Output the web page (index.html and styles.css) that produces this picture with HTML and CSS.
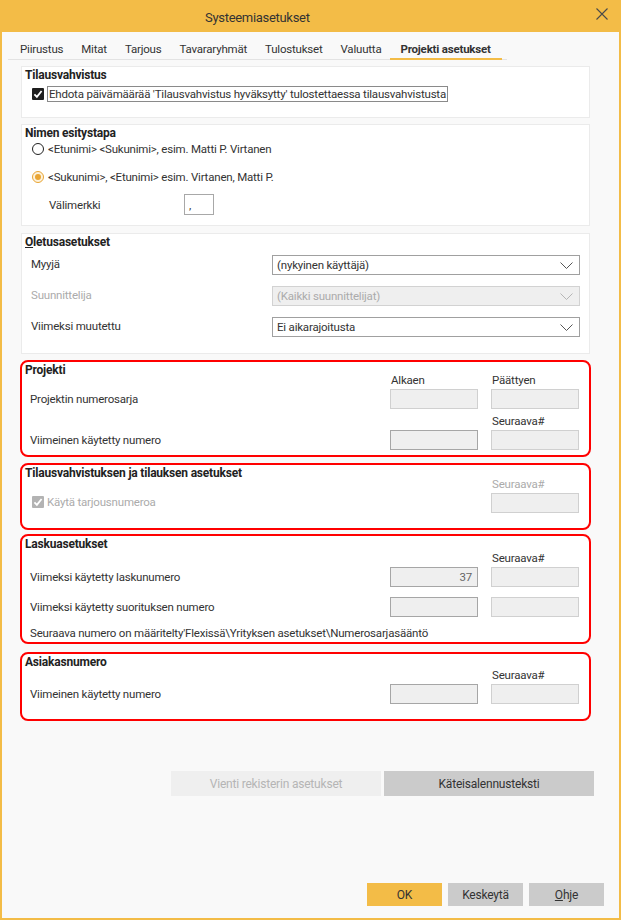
FILE: index.html
```html
<!DOCTYPE html>
<html lang="fi">
<head>
    <meta charset="UTF-8">
    <title>Systeemiasetukset</title>
    <link rel="stylesheet" href="styles.css">
</head>
<body>

<div class="window">
    <div class="titlebar">
        <span class="title">Systeemiasetukset</span>
        <svg class="close" width="12" height="12" viewBox="0 0 12 12">
            <path d="M0.5 0.5 L11.5 11.5 M11.5 0.5 L0.5 11.5" stroke="#4a4a4a" stroke-width="1.1" fill="none"/>
        </svg>
    </div>

    <!-- tab strip -->
    <div class="tabs">
        <span class="tab">Piirustus</span>
        <span class="tab">Mitat</span>
        <span class="tab">Tarjous</span>
        <span class="tab">Tavararyhmät</span>
        <span class="tab">Tulostukset</span>
        <span class="tab">Valuutta</span>
        <span class="tab active">Projekti asetukset</span>
    </div>

    <div class="groups">
        <!-- Tilausvahvistus -->
        <section class="group g-confirm">
            <h3>Tilausvahvistus</h3>
            <label class="check">
                <svg class="box" width="12" height="12" viewBox="0 0 12 12">
                    <rect width="12" height="12" rx="1" fill="#1e1e1e"/>
                    <path d="M2.4 6.3 L4.9 8.8 L9.6 3" stroke="#fff" stroke-width="1.8" fill="none"/>
                </svg>
                <span class="focus">Ehdota päivämäärää 'Tilausvahvistus hyväksytty' tulostettaessa tilausvahvistusta</span>
            </label>
        </section>

        <!-- Nimen esitystapa -->
        <section class="group g-name">
            <h3>Nimen esitystapa</h3>
            <label class="radio-row"><span class="radio"></span>&lt;Etunimi&gt; &lt;Sukunimi&gt;, esim. Matti P. Virtanen</label>
            <label class="radio-row second"><span class="radio on"></span>&lt;Sukunimi&gt;, &lt;Etunimi&gt; esim. Virtanen, Matti P.</label>
            <div class="sep-row">
                <span class="sep-label">Välimerkki</span>
                <span class="sep-input">,</span>
            </div>
        </section>

        <!-- Oletusasetukset -->
        <section class="group g-defaults">
            <h3><u>O</u>letusasetukset</h3>
            <div class="select-row first">
                <span class="row-label">Myyjä</span>
                <div class="select">(nykyinen käyttäjä)<svg class="chev" width="13" height="7" viewBox="0 0 13 7"><path d="M0.5 0.5 L6.5 6.5 L12.5 0.5" stroke="#555" stroke-width="1" fill="none"/></svg></div>
            </div>
            <div class="select-row">
                <span class="row-label muted">Suunnittelija</span>
                <div class="select disabled">(Kaikki suunnittelijat)<svg class="chev" width="13" height="7" viewBox="0 0 13 7"><path d="M0.5 0.5 L6.5 6.5 L12.5 0.5" stroke="#b5b5b5" stroke-width="1" fill="none"/></svg></div>
            </div>
            <div class="select-row">
                <span class="row-label">Viimeksi muutettu</span>
                <div class="select">Ei aikarajoitusta<svg class="chev" width="13" height="7" viewBox="0 0 13 7"><path d="M0.5 0.5 L6.5 6.5 L12.5 0.5" stroke="#555" stroke-width="1" fill="none"/></svg></div>
            </div>
        </section>

        <!-- Projekti -->
        <section class="group marked g-project">
            <h3>Projekti</h3>
            <div class="num-row top">
                <span class="row-label">Projektin numerosarja</span>
                <div class="cell"><span class="caption">Alkaen</span><span class="num"></span></div>
                <div class="cell"><span class="caption">Päättyen</span><span class="num"></span></div>
            </div>
            <div class="num-row">
                <span class="row-label">Viimeinen käytetty numero</span>
                <div class="cell"><span class="num dark"></span></div>
                <div class="cell"><span class="caption">Seuraava#</span><span class="num"></span></div>
            </div>
        </section>

        <!-- Tilausvahvistuksen ja tilauksen asetukset -->
        <section class="group marked g-order">
            <h3>Tilausvahvistuksen ja tilauksen asetukset</h3>
            <div class="num-row order">
                <label class="check muted">
                    <svg class="box" width="12" height="12" viewBox="0 0 12 12">
                        <rect width="12" height="12" rx="1" fill="#b3b3b3"/>
                        <path d="M2.4 6.3 L4.9 8.8 L9.6 3" stroke="#fff" stroke-width="1.8" fill="none"/>
                    </svg>
                    Käytä tarjousnumeroa
                </label>
                <div class="cell"></div>
                <div class="cell"><span class="caption muted">Seuraava#</span><span class="num"></span></div>
            </div>
        </section>

        <!-- Laskuasetukset -->
        <section class="group marked g-invoice">
            <h3>Laskuasetukset</h3>
            <div class="num-row">
                <span class="row-label">Viimeksi käytetty laskunumero</span>
                <div class="cell"><span class="num dark">37</span></div>
                <div class="cell"><span class="caption">Seuraava#</span><span class="num"></span></div>
            </div>
            <div class="num-row second">
                <span class="row-label">Viimeksi käytetty suorituksen numero</span>
                <div class="cell"><span class="num dark"></span></div>
                <div class="cell"><span class="num"></span></div>
            </div>
            <p class="note">Seuraava numero on määritelty'Flexissä\Yrityksen asetukset\Numerosarjasääntö</p>
        </section>

        <!-- Asiakasnumero -->
        <section class="group marked g-customer">
            <h3>Asiakasnumero</h3>
            <div class="num-row">
                <span class="row-label">Viimeinen käytetty numero</span>
                <div class="cell"><span class="num dark"></span></div>
                <div class="cell"><span class="caption">Seuraava#</span><span class="num"></span></div>
            </div>
        </section>
    </div>

    <div class="extra-buttons">
        <button class="wide-btn" disabled>Vienti rekisterin asetukset</button>
        <button class="wide-btn">Käteisalennusteksti</button>
    </div>

    <div class="footer">
        <button class="btn primary">OK</button>
        <button class="btn">Keskeytä</button>
        <button class="btn"><u>O</u>hje</button>
    </div>
</div>

</body>
</html>
```

FILE: styles.css
```css
body {
    margin: 0;
    background-color: #ffffff;
    font-family: Roboto, "Liberation Sans", sans-serif;
    font-size: 11.5px;
    letter-spacing: -0.2px;
    color: #333;
}
.window {
    width: 621px;
    height: 920px;
    box-sizing: border-box;
    border: 2px solid #f3bc47;
    border-top: 0;
    background-color: #f9f9f9;
    display: flex;
    flex-direction: column;
}
.titlebar {
    height: 32px;
    margin: 0 -2px;
    background-color: #f3bc47;
    display: flex;
    align-items: center;
    padding-left: 205px;
}
.title {
    font-size: 13px;
    letter-spacing: -0.3px;
    color: #333;
    margin-top: 2px;
}
.close {
    margin-left: auto;
    margin-right: 13px;
    margin-bottom: 5px;
}

/* tabs */
.tabs {
    display: flex;
    width: 499px;
    margin: 8px 0 0 6px;
    border-bottom: 1px solid #e3e3e3;
    white-space: nowrap;
}
.tab {
    flex-shrink: 0;
    padding: 2px 9px;
    line-height: 14px;
    margin-bottom: -1px;
    border-bottom: 2px solid transparent;
    color: #333;
}
.tab:first-child {
    padding-left: 12px;
}
.tab.active {
    font-weight: bold;
    padding: 2px 11px 2px 10px;
    border-bottom-color: #f3bc47;
}

/* groups */
.groups {
    display: flex;
    flex-direction: column;
    gap: 6px;
    margin: 6px 29px 0 19px;
}
.group {
    background-color: #fff;
    border: 1px solid #ebebeb;
    padding: 1px 9px 0 3px;
}
.group h3 {
    margin: 0;
    font-size: 12px;
    line-height: 14px;
    font-weight: bold;
    color: #222;
}
.group.marked {
    border: 2px solid #ff0000;
    border-radius: 8px;
    margin-left: -1px;
    margin-right: -1px;
    padding-right: 10px;
}
.muted {
    color: #ababab;
}

.check {
    display: flex;
    align-items: center;
    gap: 3px;
    line-height: 14px;
    margin-left: 7px;
}
.focus {
    border: 1px solid #8a8a8a;
    padding: 0 1px;
}
.g-confirm {
    padding-bottom: 15px;
}
.g-confirm .check {
    margin-top: 4px;
}

.radio-row {
    display: flex;
    align-items: center;
    gap: 4px;
    line-height: 14px;
    margin: 2px 0 0 7px;
}
.radio-row.second {
    margin-top: 14px;
}
.radio {
    width: 12px;
    height: 12px;
    box-sizing: border-box;
    border: 1px solid #222;
    border-radius: 50%;
    display: flex;
    align-items: center;
    justify-content: center;
}
.radio.on {
    border-color: #e9a534;
    background-color: #fdf2dc;
}
.radio.on::after {
    content: "";
    width: 6px;
    height: 6px;
    border-radius: 50%;
    background-color: #e9a534;
}
.sep-row {
    display: flex;
    align-items: center;
    margin: 10px 0 0 24px;
}
.g-name {
    padding-bottom: 10px;
}
.sep-label {
    width: 135px;
}
.sep-input {
    width: 30px;
    height: 21px;
    box-sizing: border-box;
    border: 1px solid #a8a8a8;
    padding: 3px 0 0 4px;
    line-height: 14px;
}

.select-row {
    display: grid;
    grid-template-columns: 1fr 308px;
    align-items: center;
    margin: 11px 0 0 6px;
}
.select-row.first {
    margin-top: 6px;
}
.g-defaults {
    padding-bottom: 16px;
    margin-top: 1px;
}
.row-label {
    margin-top: -3px;
}
.select {
    height: 20px;
    box-sizing: border-box;
    border: 1px solid #a0a0a0;
    background-color: #fff;
    display: flex;
    align-items: center;
    padding: 0 6px 0 4px;
}
.select.disabled {
    background-color: #efefef;
    border-color: #d2d2d2;
    color: #ababab;
}
.chev {
    margin-left: auto;
}

/* number rows */
.num-row {
    display: grid;
    grid-template-columns: 1fr 88px 88px;
    column-gap: 13px;
    align-items: end;
    margin-left: 5px;
}
.num-row .row-label {
    line-height: 20px;
    margin-top: 0;
}
.cell {
    display: flex;
    flex-direction: column;
}
.caption {
    line-height: 12px;
    margin: 0 0 3px 1px;
}
.num {
    height: 20px;
    box-sizing: border-box;
    border: 1px solid #d0d0d0;
    background-color: #efefef;
    text-align: right;
    padding-right: 5px;
    line-height: 18px;
    color: #666;
}
.num.dark {
    border-color: #a6a6a6;
}

.group.g-project {
    padding-bottom: 5px;
}
.g-project .num-row.top {
    margin-top: -3px;
}
.g-project .num-row + .num-row {
    margin-top: 6px;
}
.group.g-order {
    margin-top: 0;
    padding-bottom: 15px;
}
.g-order .num-row {
    margin-top: -2px;
}
.g-order .check {
    margin: 0 0 4px 2px;
}
.group.g-invoice {
    margin-top: -2px;
    padding-bottom: 2px;
}
.g-invoice .num-row {
    margin-top: 1px;
}
.g-invoice .num-row.second {
    margin-top: 10px;
}
.note {
    margin: 9px 0 0 5px;
    line-height: 14px;
}
.group.g-customer {
    margin-top: 2px;
    padding-bottom: 15px;
}
.g-customer .num-row {
    margin-top: 0;
}

/* buttons */
.extra-buttons {
    display: flex;
    gap: 3px;
    margin: 50px 0 0 169px;
}
.wide-btn {
    width: 210px;
    height: 25px;
    border: none;
    background-color: #cbcbcb;
    font-family: inherit;
    font-size: 12px;
    letter-spacing: inherit;
    color: #333;
}
.wide-btn:disabled {
    background-color: #efefef;
    color: #b5b5b5;
}
.footer {
    margin-top: auto;
    display: flex;
    justify-content: flex-end;
    gap: 6px;
    padding: 0 15px 12px 0;
}
.btn {
    width: 75px;
    height: 23px;
    border: none;
    background-color: #cbcbcb;
    font-family: inherit;
    font-size: 12px;
    letter-spacing: inherit;
    color: #333;
}
.btn.primary {
    background-color: #f3bc47;
}
```
